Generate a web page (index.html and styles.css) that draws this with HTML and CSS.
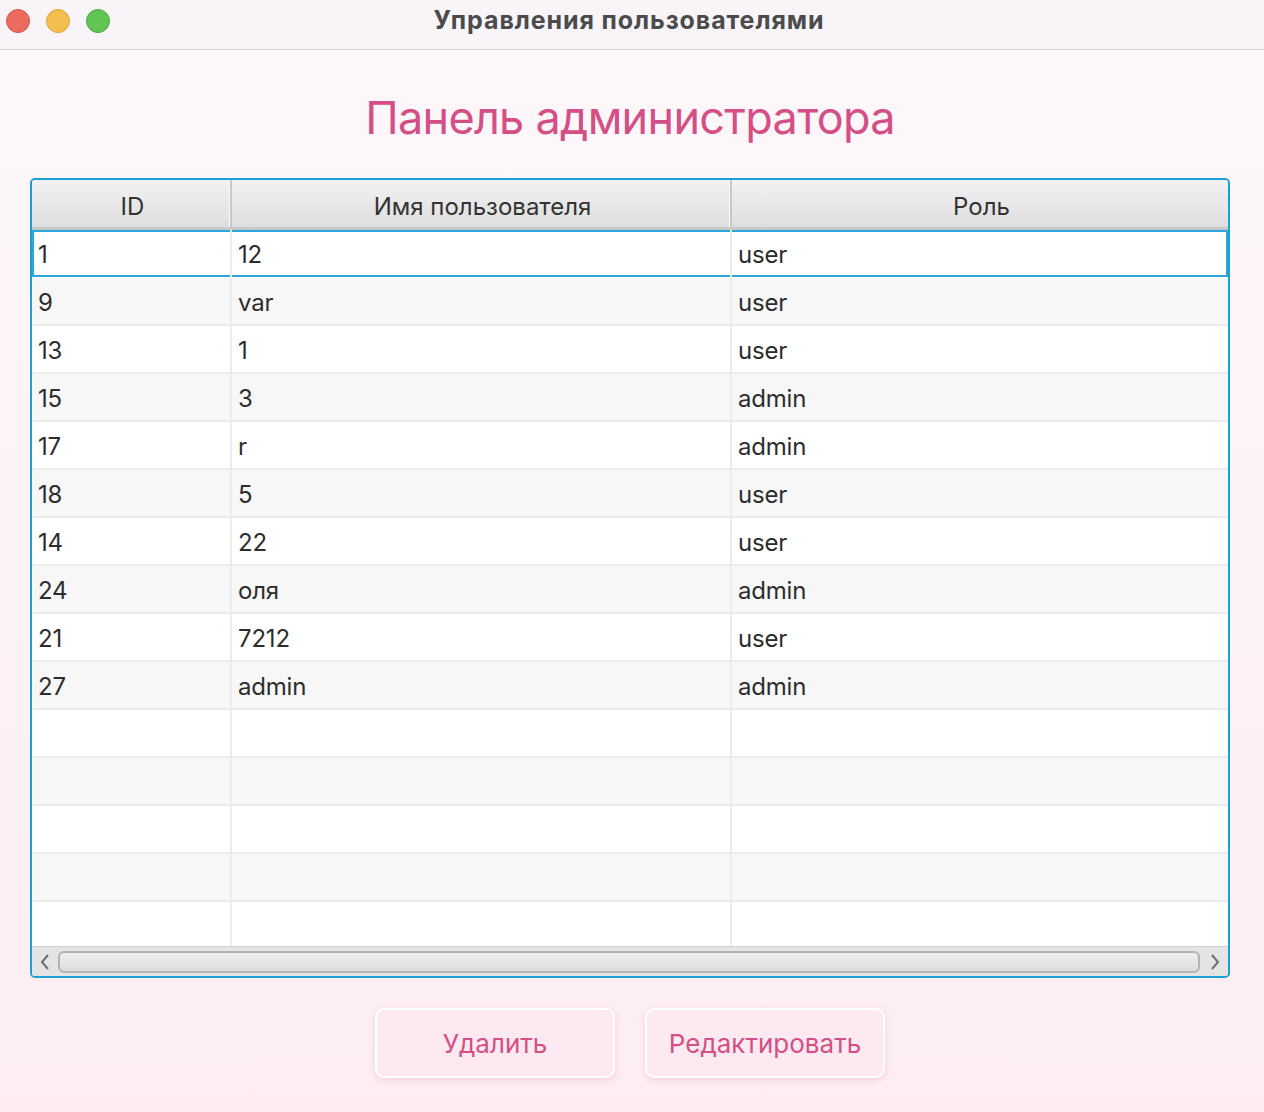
FILE: index.html
```html
<!DOCTYPE html>
<html lang="ru">
<head>
<meta charset="utf-8">
<link rel="stylesheet" href="styles.css">
</head>
<body>
<div class="window">
  <div class="titlebar">
    <div class="lights">
      <span class="light red"></span>
      <span class="light yellow"></span>
      <span class="light green"></span>
    </div>
    <div class="wtitle">Управления пользователями</div>
  </div>
  <div class="content">
    <h1 class="heading">Панель администратора</h1>
    <div class="table">
      <div class="thead">
        <div class="th c1">ID</div>
        <div class="th c2">Имя пользователя</div>
        <div class="th c3">Роль</div>
      </div>
      <div class="tbody">
        <div class="row selected"><div class="td c1">1</div><div class="td c2">12</div><div class="td c3">user</div></div>
        <div class="row"><div class="td c1">9</div><div class="td c2">var</div><div class="td c3">user</div></div>
        <div class="row"><div class="td c1">13</div><div class="td c2">1</div><div class="td c3">user</div></div>
        <div class="row"><div class="td c1">15</div><div class="td c2">3</div><div class="td c3">admin</div></div>
        <div class="row"><div class="td c1">17</div><div class="td c2">r</div><div class="td c3">admin</div></div>
        <div class="row"><div class="td c1">18</div><div class="td c2">5</div><div class="td c3">user</div></div>
        <div class="row"><div class="td c1">14</div><div class="td c2">22</div><div class="td c3">user</div></div>
        <div class="row"><div class="td c1">24</div><div class="td c2">оля</div><div class="td c3">admin</div></div>
        <div class="row"><div class="td c1">21</div><div class="td c2">7212</div><div class="td c3">user</div></div>
        <div class="row"><div class="td c1">27</div><div class="td c2">admin</div><div class="td c3">admin</div></div>
        <div class="row"><div class="td c1"></div><div class="td c2"></div><div class="td c3"></div></div>
        <div class="row"><div class="td c1"></div><div class="td c2"></div><div class="td c3"></div></div>
        <div class="row"><div class="td c1"></div><div class="td c2"></div><div class="td c3"></div></div>
        <div class="row"><div class="td c1"></div><div class="td c2"></div><div class="td c3"></div></div>
        <div class="row"><div class="td c1"></div><div class="td c2"></div><div class="td c3"></div></div>
      </div>
      <div class="hscroll">
        <div class="arrow">
          <svg width="12" height="18" viewBox="0 0 12 18"><path d="M9 2 L3 9 L9 16" fill="none" stroke="#6e6e6e" stroke-width="2"/></svg>
        </div>
        <div class="thumb"></div>
        <div class="arrow">
          <svg width="12" height="18" viewBox="0 0 12 18"><path d="M3 2 L9 9 L3 16" fill="none" stroke="#6e6e6e" stroke-width="2"/></svg>
        </div>
      </div>
    </div>
    <div class="actions">
      <button class="btn">Удалить</button>
      <button class="btn">Редактировать</button>
    </div>
  </div>
</div>
</body>
</html>
```

FILE: styles.css
```css
html, body {
  margin: 0;
  padding: 0;
}
body {
  width: 1264px;
  height: 1112px;
  overflow: hidden;
  font-family: Inter, "Noto Sans", "DejaVu Sans", sans-serif;
}
.window {
  width: 1264px;
  height: 1112px;
  display: flex;
  flex-direction: column;
  background: linear-gradient(180deg, #fdf8fa 0%, #fdedf2 100%);
}
.titlebar {
  height: 50px;
  box-sizing: border-box;
  border-bottom: 1px solid #d8d6d8;
  background: #f8f4f8;
  display: flex;
  align-items: center;
  position: relative;
}
.lights {
  display: flex;
  gap: 16px;
  padding-left: 6px;
  margin-top: -8px;
}
.light {
  width: 24px;
  height: 24px;
  border-radius: 50%;
  box-sizing: border-box;
}
.red { background: #ed6a5e; border: 1px solid #d4564b; }
.yellow { background: #f5bf4f; border: 1px solid #d9a43e; }
.green { background: #61c554; border: 1px solid #4ea943; }
.wtitle {
  position: absolute;
  left: 0;
  right: 0;
  top: 5px;
  text-align: center;
  font-size: 25px;
  font-weight: 700;
  color: #4b4b4b;
  letter-spacing: 0.9px;
  padding-right: 6px;
}
.content {
  flex: 1;
  display: flex;
  flex-direction: column;
  align-items: center;
  padding-right: 4px;
}
.heading {
  margin: 40px 0 0 0;
  height: 88px;
  font-size: 45px;
  font-weight: 400;
  color: #d44f85;
  line-height: 56px;
  letter-spacing: -0.7px;
  padding-left: 0;
}
.table {
  width: 1200px;
  height: 800px;
  box-sizing: border-box;
  border: 2px solid #1a9fd6;
  border-radius: 5px;
  background: #fff;
  display: flex;
  flex-direction: column;
  overflow: hidden;
}
.thead {
  display: flex;
  height: 50px;
  box-sizing: border-box;
  border-bottom: 3px solid #c9c9c9;
  background: linear-gradient(180deg, #f2f2f2 0%, #dedede 100%);
  flex: none;
}
.th {
  box-sizing: border-box;
  display: flex;
  align-items: center;
  justify-content: center;
  padding-top: 5px;
  padding-left: 3px;
  font-size: 24px;
  color: #333;
  border-right: 2px solid #c8c8c8;
  box-shadow: inset -1px 0 0 #f7f7f7;
}
.th.c3 { border-right: none; box-shadow: none; }
.c1 { width: 200px; }
.c2 { width: 500px; }
.c3 { flex: 1; }
.tbody {
  flex: 1;
  overflow: hidden;
  display: flex;
  flex-direction: column;
}
.row {
  display: flex;
  height: 48px;
  flex: none;
  box-sizing: border-box;
  border-bottom: 2px solid #ececec;
  background: #fff;
}
.row:nth-child(even) { background: #f7f7f7; }
.row.selected {
  box-shadow: inset 0 0 0 2px #2ba6d8;
  height: 47px;
  border-bottom: none;
  margin-bottom: 1px;
}
.td {
  box-sizing: border-box;
  border-right: 2px solid #ececec;
  font-size: 24px;
  color: #2d2d2d;
  padding-left: 6px;
  padding-top: 2px;
  display: flex;
  align-items: center;
  letter-spacing: -0.2px;
}
.td.c3 { border-right: none; }
.hscroll {
  height: 30px;
  flex: none;
  display: flex;
  align-items: center;
  background: #e4e4e4;
  border-top: 1px solid #d0d0d0;
  box-sizing: border-box;
}
.arrow {
  width: 26px;
  display: flex;
  justify-content: center;
  align-items: center;
}
.arrow:last-child { padding-left: 2px; }
.thumb {
  flex: 1;
  height: 22px;
  box-sizing: border-box;
  border: 2px solid #b3b3b3;
  border-radius: 6px;
  background: linear-gradient(180deg, #efefef 0%, #dcdcdc 100%);
}
.actions {
  display: flex;
  gap: 30px;
  margin-top: 30px;
}
.btn {
  width: 240px;
  height: 70px;
  box-sizing: border-box;
  border: 2px solid #ffffff;
  border-radius: 9px;
  background: #fde9f0;
  box-shadow: 0 2px 6px rgba(210, 120, 160, 0.25);
  font-family: Inter, "Noto Sans", sans-serif;
  font-size: 26px;
  color: #d44f85;
  cursor: pointer;
}
```
